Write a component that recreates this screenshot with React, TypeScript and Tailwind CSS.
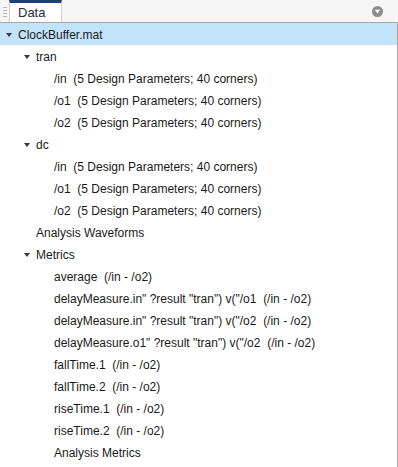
import React from 'react';

type Row = { label: string; level: number; open?: boolean; selected?: boolean };

const rows: Row[] = [
  { label: 'ClockBuffer.mat', level: 0, open: true, selected: true },
  { label: 'tran', level: 1, open: true },
  { label: '/in  (5 Design Parameters; 40 corners)', level: 2 },
  { label: '/o1  (5 Design Parameters; 40 corners)', level: 2 },
  { label: '/o2  (5 Design Parameters; 40 corners)', level: 2 },
  { label: 'dc', level: 1, open: true },
  { label: '/in  (5 Design Parameters; 40 corners)', level: 2 },
  { label: '/o1  (5 Design Parameters; 40 corners)', level: 2 },
  { label: '/o2  (5 Design Parameters; 40 corners)', level: 2 },
  { label: 'Analysis Waveforms', level: 1 },
  { label: 'Metrics', level: 1, open: true },
  { label: 'average  (/in - /o2)', level: 2 },
  { label: 'delayMeasure.in" ?result "tran") v("/o1  (/in - /o2)', level: 2 },
  { label: 'delayMeasure.in" ?result "tran") v("/o2  (/in - /o2)', level: 2 },
  { label: 'delayMeasure.o1" ?result "tran") v("/o2  (/in - /o2)', level: 2 },
  { label: 'fallTime.1  (/in - /o2)', level: 2 },
  { label: 'fallTime.2  (/in - /o2)', level: 2 },
  { label: 'riseTime.1  (/in - /o2)', level: 2 },
  { label: 'riseTime.2  (/in - /o2)', level: 2 },
  { label: 'Analysis Metrics', level: 2 },
];

const indent = ['pl-[6px]', 'pl-[24px]', 'pl-[42px]'];

function Caret() {
  return (
    <svg width="6" height="4" viewBox="0 0 6 4" className="shrink-0">
      <path d="M0 0 L6 0 L3 4 Z" fill="#3a3a3a" />
    </svg>
  );
}

export default function App() {
  return (
    <div className="w-[398px] h-[467px] bg-white flex flex-col font-['Liberation_Sans',Arial,sans-serif] text-[12px] text-[#1a1a1a] overflow-hidden">
      {/* tab strip */}
      <div className="h-[23px] shrink-0 flex items-stretch bg-[#f5f5f5] border-b border-[#a8a8a8]">
        <div className="w-[9px] flex items-center justify-center">
          <div className="flex flex-col gap-[2px] mt-[2px]">
            <div className="w-[4px] h-px bg-[#b5b5b5]" />
            <div className="w-[4px] h-px bg-[#b5b5b5]" />
            <div className="w-[4px] h-px bg-[#b5b5b5]" />
            <div className="w-[4px] h-px bg-[#b5b5b5]" />
          </div>
        </div>
        <div className="w-[53px] bg-white border-t-[3px] border-t-[#1d3f7a] border-x border-x-[#cfcfcf] flex items-center pl-[8px] text-[13px] text-[#1f2a44]">
          Data
        </div>
        <div className="flex-1" />
        <div className="w-[26px] flex items-center justify-start pt-[1px]">
          <svg width="11" height="11" viewBox="0 0 11 11">
            <circle cx="5.5" cy="5.5" r="5.5" fill="#8c8c8c" />
            <path d="M2.8 3.8 L8.2 3.8 L5.5 7.6 Z" fill="#fff" />
          </svg>
        </div>
      </div>
      {/* tree */}
      <div className="flex-1 flex flex-col border-r border-[#a8a8a8]">
        {rows.map((r, i) => (
          <div
            key={i}
            className={`h-[22px] shrink-0 flex items-center pt-[2px] whitespace-pre ${indent[r.level]} ${r.selected ? 'bg-[#c2e4fb]' : ''}`}
          >
            <div className="w-[12px] flex items-center">{r.open && <Caret />}</div>
            <span>{r.label}</span>
          </div>
        ))}
      </div>
    </div>
  );
}
